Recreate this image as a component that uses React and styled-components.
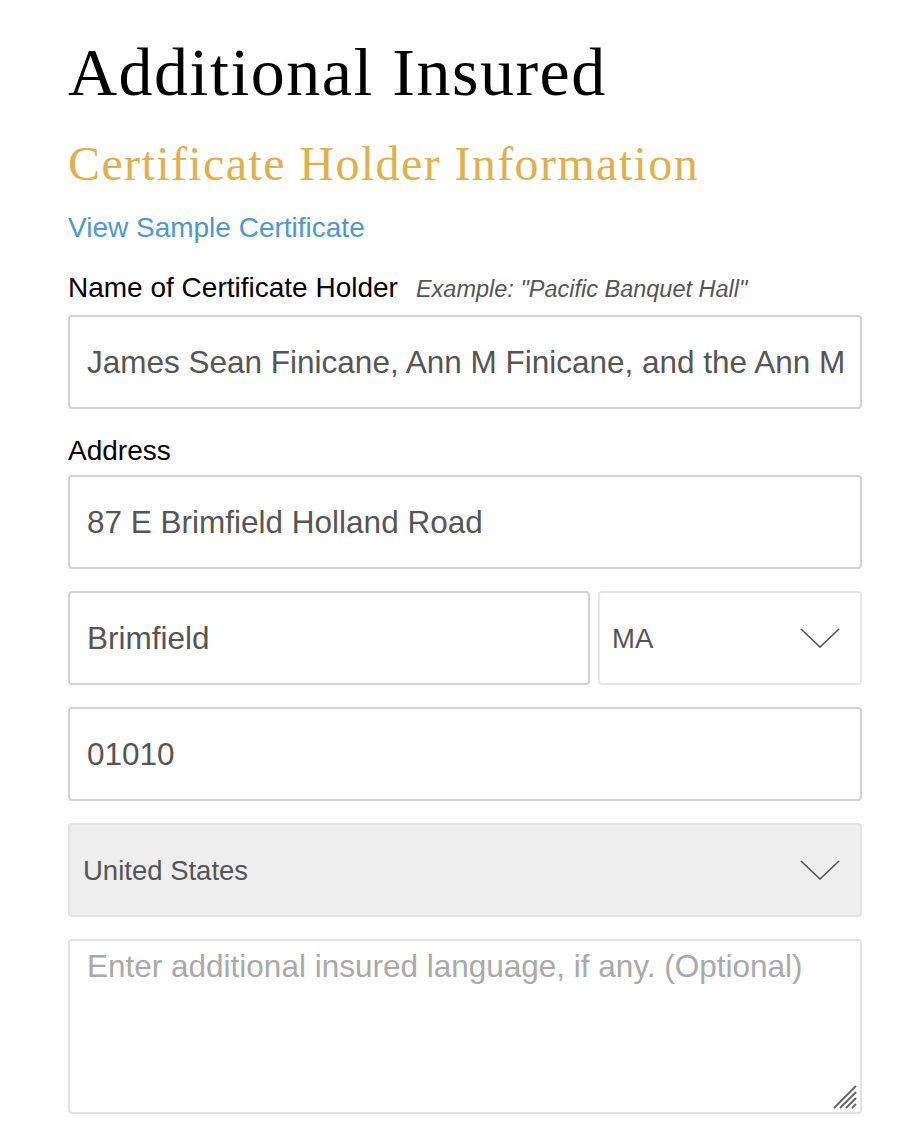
import React from "react";
import styled, { createGlobalStyle } from "styled-components";

const Global = createGlobalStyle`
  html, body { margin: 0; padding: 0; background: #fff; }
  body { font-family: "Liberation Sans", Arial, sans-serif; }
  * { box-sizing: border-box; }
`;

const Page = styled.div`
  padding: 34px 0 0 68px;
  width: 862px;
`;

const Title = styled.h1`
  margin: 0;
  font-family: "Liberation Serif", "Times New Roman", serif;
  font-weight: 400;
  font-size: 68px;
  line-height: 76px;
  letter-spacing: 1.5px;
  color: #000;
`;

const Subtitle = styled.h2`
  margin: 27px 0 0;
  font-family: "Liberation Serif", "Times New Roman", serif;
  font-weight: 400;
  font-size: 48px;
  line-height: 54px;
  letter-spacing: 1.4px;
  color: #e0b14a;
`;

const Link = styled.a`
  display: block;
  margin-top: 21px;
  font-size: 28px;
  line-height: 32px;
  color: #4a9ad0;
  text-decoration: none;
`;

const Label = styled.label`
  display: flex;
  align-items: baseline;
  gap: 18px;
  margin: ${(p) => p.$top}px 0 ${(p) => p.$bottom}px;
  font-size: 28px;
  line-height: 32px;
  color: #000;
`;

const Hint = styled.span`
  font-style: italic;
  font-size: 23.5px;
  color: #555;
`;

const Field = styled.input`
  display: block;
  width: ${(p) => (p.$w ? `${p.$w}px` : "100%")};
  flex: ${(p) => (p.$w ? `0 0 ${p.$w}px` : "initial")};
  height: 94px;
  padding: 0 10px 0 17px;
  border: 2px solid #d2d2d2;
  border-radius: 4px;
  font-family: "Liberation Sans", Arial, sans-serif;
  font-size: 31.5px;
  color: #555;
  background: #fff;
  outline: none;
`;

const Stack = styled.div`
  display: flex;
  flex-direction: column;
  gap: 22px;
`;

const Row = styled.div`
  display: flex;
  gap: 8px;
`;

const SelectWrap = styled.div`
  position: relative;
  flex: 1;
`;

const Select = styled.select`
  display: block;
  width: 100%;
  height: 94px;
  appearance: none;
  -webkit-appearance: none;
  padding: 0 0 0 ${(p) => p.$pad}px;
  border: 2px solid ${(p) => (p.$muted ? "#e3e3e3" : "#e6e6e6")};
  border-radius: 4px;
  background: ${(p) => (p.$muted ? "#eeeeee" : "#fff")};
  font-family: "Liberation Sans", Arial, sans-serif;
  font-size: 27.5px;
  color: #555;
  outline: none;
`;

const Chevron = styled.svg`
  position: absolute;
  right: 22px;
  top: 50%;
  margin-top: -10px;
  pointer-events: none;
`;

const AreaWrap = styled.div`
  position: relative;
`;

const Area = styled.textarea`
  display: block;
  width: 100%;
  height: 175px;
  padding: 7px 17px;
  border: 2px solid #e2e2e2;
  border-radius: 4px;
  resize: none;
  font-family: "Liberation Sans", Arial, sans-serif;
  font-size: 31.5px;
  line-height: 36px;
  color: #555;
  outline: none;
  &::placeholder { color: #a9a9a9; }
`;

const Grip = styled.svg`
  position: absolute;
  right: 4px;
  bottom: 4px;
  pointer-events: none;
`;

const Down = () => (
  <Chevron width="40" height="20" viewBox="0 0 40 20">
    <path d="M1 1 L20 19 L39 1" fill="none" stroke="#555" strokeWidth="1.6" />
  </Chevron>
);

export default function App() {
  return (
    <>
      <Global />
      <Page>
        <Title>Additional Insured</Title>
        <Subtitle>Certificate Holder Information</Subtitle>
        <Link href="#">View Sample Certificate</Link>
        <Label $top={28} $bottom={10}>
          Name of Certificate Holder
          <Hint>Example: "Pacific Banquet Hall"</Hint>
        </Label>
        <Field defaultValue="James Sean Finicane, Ann M Finicane, and the Ann M Finicane Trust" />
        <Label $top={26} $bottom={8}>Address</Label>
        <Stack>
          <Field defaultValue="87 E Brimfield Holland Road" />
          <Row>
            <Field defaultValue="Brimfield" $w={522} />
            <SelectWrap>
              <Select defaultValue="MA" $pad={12}>
                <option value="MA">MA</option>
              </Select>
              <Down />
            </SelectWrap>
          </Row>
          <Field defaultValue="01010" />
          <SelectWrap>
            <Select defaultValue="US" $muted $pad={13}>
              <option value="US">United States</option>
            </Select>
            <Down />
          </SelectWrap>
          <AreaWrap>
            <Area placeholder="Enter additional insured language, if any. (Optional)" />
            <Grip width="26" height="26" viewBox="0 0 26 26">
              <g stroke="#666" strokeWidth="2">
                <line x1="2" y1="24" x2="24" y2="2" />
                <line x1="8" y1="24" x2="24" y2="8" />
                <line x1="14" y1="24" x2="24" y2="14" />
                <line x1="20" y1="24" x2="24" y2="20" />
              </g>
            </Grip>
          </AreaWrap>
        </Stack>
      </Page>
    </>
  );
}
